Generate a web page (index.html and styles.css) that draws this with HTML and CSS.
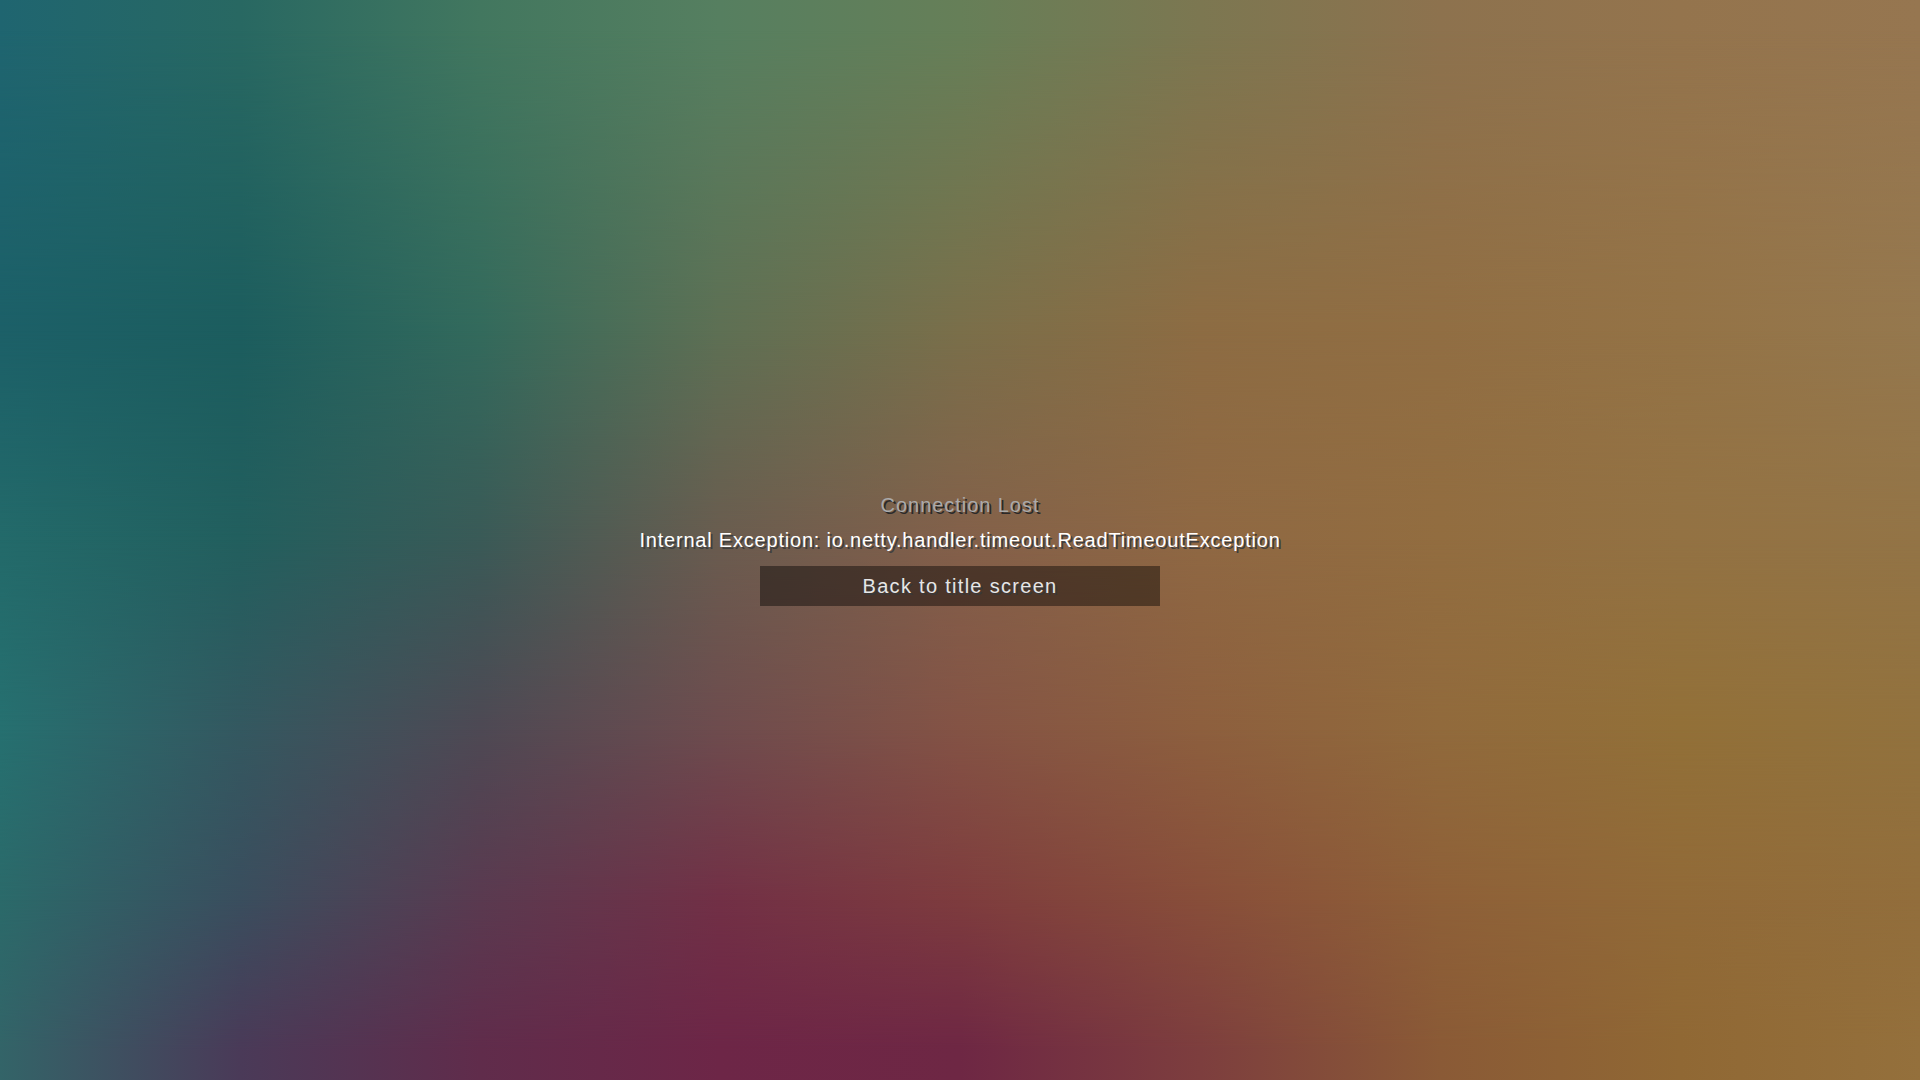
FILE: index.html
```html
<!DOCTYPE html>
<html lang="en">
<head>
<meta charset="utf-8">
<title>Connection Lost</title>
<link rel="stylesheet" href="styles.css">
</head>
<body>
<div class="stage">
  <div class="layer row-a"></div>
  <div class="layer row-b"></div>
  <div class="layer row-c"></div>
  <div class="layer row-d"></div>
  <div class="layer row-e"></div>
  <div class="layer row-f"></div>
  <main class="screen">
    <p class="title">Connection Lost</p>
    <p class="reason">Internal Exception: io.netty.handler.timeout.ReadTimeoutException</p>
    <button class="btn" type="button">Back to title screen</button>
  </main>
</div>
</body>
</html>
```
FILE: styles.css
```css
html, body {
  margin: 0;
  padding: 0;
  width: 100%;
  height: 100%;
  overflow: hidden;
}

.stage {
  display: grid;
  width: 100vw;
  height: 100vh;
}

.layer,
.screen {
  grid-area: 1 / 1;
}

.row-a {
  background: linear-gradient(to right, #1f6570 0%, #286862 12.5%, #42775f 25%, #567f60 37.5%, #667f58 50%, #7c7751 62.5%, #8d724e 75%, #94744d 87.5%, #967650 100%);
}
.row-b {
  background: linear-gradient(to right, #1c6068 0%, #1c5d5e 12.5%, #336a5c 25%, #5e7054 37.5%, #7a6f4a 50%, #8d6c43 62.5%, #916e43 75%, #947346 87.5%, #95784e 100%);
  -webkit-mask-image: linear-gradient(to bottom, transparent 2.8%, #000 30.6%);
  mask-image: linear-gradient(to bottom, transparent 2.8%, #000 30.6%);
}
.row-c {
  background: linear-gradient(to right, #236a6a 0%, #225f5e 12.5%, #3a5a57 25%, #6a5c4f 37.5%, #83604a 50%, #8f6843 62.5%, #926d40 75%, #937243 87.5%, #937446 100%);
  -webkit-mask-image: linear-gradient(to bottom, transparent 30.6%, #000 50%);
  mask-image: linear-gradient(to bottom, transparent 30.6%, #000 50%);
}
.row-d {
  background: linear-gradient(to right, #267070 0%, #345860 12.5%, #4e4954 25%, #6e4c4e 37.5%, #845345 50%, #8d5f3e 62.5%, #916a3c 75%, #927038 87.5%, #92723e 100%);
  -webkit-mask-image: linear-gradient(to bottom, transparent 50%, #000 67.6%);
  mask-image: linear-gradient(to bottom, transparent 50%, #000 67.6%);
}
.row-e {
  background: linear-gradient(to right, #2b6a6a 0%, #3a4e5e 12.5%, #5a3a50 25%, #723046 37.5%, #7e3c3e 50%, #884e3a 62.5%, #8e6038 75%, #916a38 87.5%, #926e3c 100%);
  -webkit-mask-image: linear-gradient(to bottom, transparent 67.6%, #000 83.3%);
  mask-image: linear-gradient(to bottom, transparent 67.6%, #000 83.3%);
}
.row-f {
  background: linear-gradient(to right, #336468 0%, #4a3a58 12.5%, #602c4b 25%, #6d2647 37.5%, #6e2744 50%, #7d3e3e 62.5%, #8a5a36 75%, #906834 87.5%, #94703c 100%);
  -webkit-mask-image: linear-gradient(to bottom, transparent 83.3%, #000 97.2%);
  mask-image: linear-gradient(to bottom, transparent 83.3%, #000 97.2%);
}

.screen {
  position: relative;
  z-index: 1;
  display: flex;
  flex-direction: column;
  align-items: center;
  padding-top: 496px;
  font-family: "Liberation Sans", Arial, sans-serif;
  font-size: 20px;
  line-height: 18px;
  letter-spacing: 0.8px;
}

.title,
.reason {
  margin: 0;
  height: 18px;
  white-space: nowrap;
}

.title {
  color: #aaaaaa;
  letter-spacing: 0.95px;
  text-shadow: 2px 2px 0 #2a2a2a;
}

.reason {
  margin-top: 17px;
  color: #ffffff;
  text-shadow: 2px 2px 0 #3f3f3f;
}

.btn {
  margin-top: 17px;
  width: 400px;
  height: 40px;
  padding: 0;
  border: 0;
  background: rgba(0, 0, 0, 0.42);
  color: #e6e6e6;
  font: inherit;
  letter-spacing: 1.3px;
  line-height: 18px;
  text-shadow: 2px 2px 0 #383838;
  cursor: pointer;
}
```
